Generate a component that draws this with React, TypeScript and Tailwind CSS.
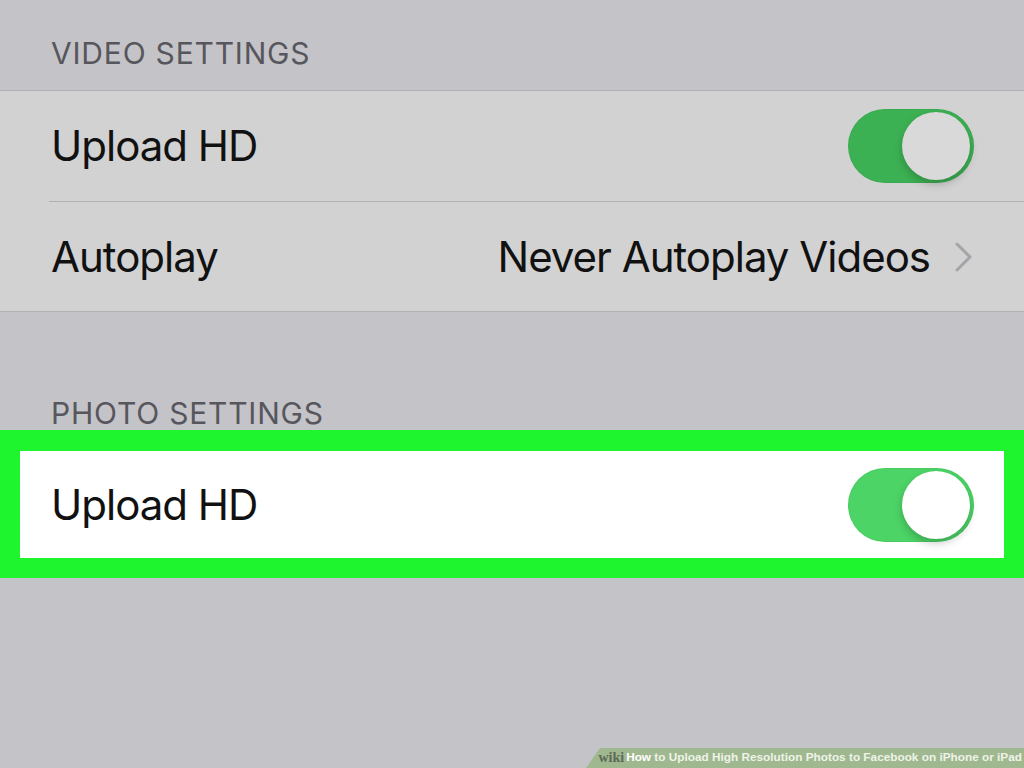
import { ReactNode } from "react";

interface ToggleProps {
  track: string;
  knob: string;
}

function Toggle({ track, knob }: ToggleProps) {
  return (
    <div
      className={`relative w-[126px] h-[74px] rounded-full ${track} shadow-[inset_0_0_0_1px_rgba(0,0,0,0.04)]`}
    >
      <div
        className={`absolute right-[4px] top-[3px] w-[68px] h-[68px] rounded-full ${knob} shadow-[0px_4px_8px_rgba(0,0,0,0.22)]`}
      />
    </div>
  );
}

function SectionHeader({ children }: { children: ReactNode }) {
  return (
    <div className="px-[51px] text-[30px] leading-[30px] text-[#56565c] tracking-[0.8px]">
      {children}
    </div>
  );
}

function Chevron() {
  return (
    <svg width="20" height="32" viewBox="0 0 20 32" fill="none">
      <path
        d="M3 3 L16 16 L3 29"
        stroke="#a4a4a9"
        strokeWidth="3"
        strokeLinecap="round"
        strokeLinejoin="round"
      />
    </svg>
  );
}

export default function App() {
  return (
    <div
      className="relative w-[1024px] h-[768px] overflow-hidden bg-[#c4c3c8] text-[#111]"
      style={{ fontFamily: "Inter, 'Liberation Sans', sans-serif" }}
    >
      {/* Video settings */}
      <div className="h-[90px] pt-[38px]">
        <SectionHeader>VIDEO SETTINGS</SectionHeader>
      </div>
      <div className="bg-[#d2d2d2] border-y border-[#b1b1b5]">
        <div className="h-[110px] flex items-center justify-between pl-[51px] pr-[50px]">
          <span className="text-[42px] leading-none tracking-[-1px]">Upload HD</span>
          <Toggle track="bg-[#3cb153]" knob="bg-[#d9d9d9]" />
        </div>
        <div className="ml-[49px] border-t border-[#b1b1b5]" />
        <div className="h-[109px] flex items-center justify-between pl-[51px] pr-[50px]">
          <span className="text-[42px] leading-none tracking-[-1px]">Autoplay</span>
          <div className="flex items-center gap-[24px]">
            <span className="text-[42px] leading-none tracking-[-1px]">
              Never Autoplay Videos
            </span>
            <Chevron />
          </div>
        </div>
      </div>

      {/* Photo settings */}
      <div className="h-[118px] pt-[86px]">
        <SectionHeader>PHOTO SETTINGS</SectionHeader>
      </div>
      <div className="bg-[#1ef52e] px-[20px] pb-[20px] pt-[21px]">
        <div className="bg-white h-[107px] flex items-center justify-between pl-[31px] pr-[30px]">
          <span className="text-[42px] leading-none tracking-[-1px]">Upload HD</span>
          <Toggle track="bg-[#4cd466]" knob="bg-white" />
        </div>
      </div>

      {/* Watermark */}
      <div className="absolute right-0 bottom-0 h-[20px] w-[438px] bg-[#9cb78a]/90 [clip-path:polygon(14px_0,100%_0,100%_100%,0_100%)] flex items-center justify-end pr-[2px] gap-[2px]">
        <span
          className="text-[14px] font-bold text-[#5d6a55] leading-none"
          style={{ fontFamily: "'Liberation Serif', serif" }}
        >
          wiki
        </span>
        <span
          className="text-[11.8px] font-bold leading-none text-[#eef3e8] whitespace-nowrap"
          style={{ fontFamily: "'Liberation Sans', Arial, sans-serif" }}
        >
          <span className="text-white">How</span> to Upload High Resolution Photos to
          Facebook on iPhone or iPad
        </span>
      </div>
    </div>
  );
}
